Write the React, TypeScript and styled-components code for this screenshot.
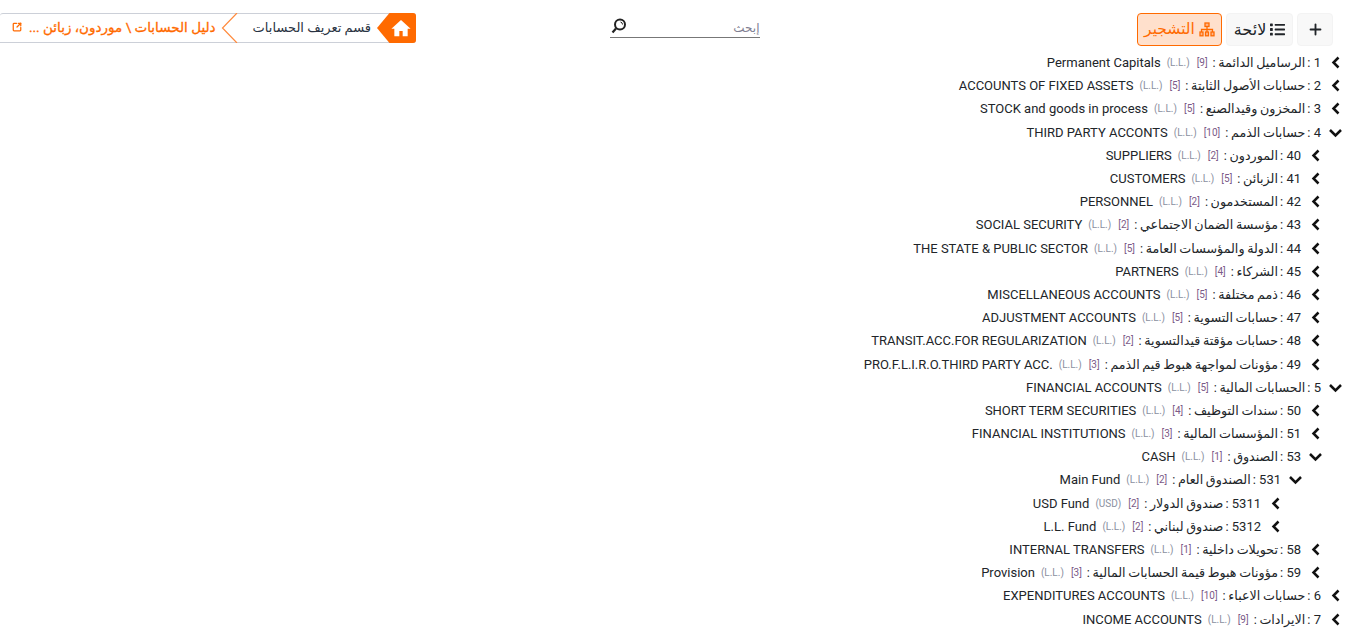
import React from "react";
import styled, { createGlobalStyle } from "styled-components";
import { FaList } from "react-icons/fa";
import { Plus, SquareArrowOutUpRight } from "lucide-react";

const Global = createGlobalStyle`
  html, body { margin: 0; padding: 0; background: #fff; height: 633px; overflow: hidden; }
  body { font-family: Roboto, "Noto Sans", "DejaVu Sans", sans-serif; color: #212529; }
`;
const Page = styled.div`
  direction: rtl;
  width: 1350px;
  height: 633px;
  overflow: hidden;
  box-sizing: border-box;
  padding-top: 13px;
`;
const Header = styled.header`
  display: grid;
  grid-template-columns: 1fr 1fr 1fr;
  align-items: start;
  height: 38px;
  padding-right: 17px;
`;
const Actions = styled.div`
  display: flex;
  gap: 4px;
`;
const ToolButton = styled.button<{ $active?: boolean }>`
  width: ${(p) => (p.$active ? 85 : 67)}px;
  height: 33px;
  box-sizing: border-box;
  display: flex;
  align-items: center;
  justify-content: center;
  gap: 4px;
  padding: 0 0 1px;
  border-radius: 4px;
  font-family: inherit;
  font-size: ${(p) => (p.$active ? 15.5 : 16)}px;
  color: ${(p) => (p.$active ? "#ff6a00" : "#212529")};
  background: ${(p) => (p.$active ? "#ffe0cc" : "#f8f8f8")};
  border: 1px solid ${(p) => (p.$active ? "#ff6a00" : "#f3f3f3")};
`;
const PlusButton = styled(ToolButton)`
  width: 36px;
`;
const SearchBox = styled.div`
  width: 150px;
  height: 24px;
  margin-left: 36px;
  justify-self: center;
  display: flex;
  align-items: center;
  justify-content: space-between;
  border-bottom: 1px solid #777;
  font-size: 12px;
  color: #7f7f92;
`;
const SearchHint = styled.span`
  padding-top: 5px;
`;
const SearchIcon = styled.svg`
  width: 16px;
  height: 16px;
  margin-top: 2px;
  margin-left: 1px;
`;
const Crumbs = styled.nav`
  justify-self: end;
  width: 416px;
  height: 30px;
  box-sizing: border-box;
  display: flex;
  align-items: center;
  padding-bottom: 2px;
  border: 1px solid #ccd0d8;
  border-left: none;
  border-radius: 3px 3px 3px 0;
  font-size: 13px;
  white-space: nowrap;
`;
const HomeTag = styled.div`
  width: 39px;
  height: 30px;
  margin: -1px -1px -3px 0;
  background: #ff6a00;
  display: flex;
  align-items: center;
  padding-right: 5px;
  box-sizing: border-box;
  border-radius: 0 3px 3px 0;
  clip-path: polygon(100% 0, 100% 100%, 32% 100%, 0 50%, 32% 0);
  flex: none;
`;
const CrumbText = styled.span`
  margin-right: 6px;
  color: #2a3342;
`;
const Divider = styled.svg`
  width: 18px;
  height: 30px;
  margin: -1px 14px -3px 0;
  flex: none;
`;
const CrumbLink = styled.span`
  margin-right: 5px;
  color: #ff6a00;
  font-size: 13.5px;
  -webkit-text-stroke: 0.3px #ff6a00;
  display: flex;
  align-items: center;
  gap: 7px;
`;
const Tree = styled.ul`
  list-style: none;
  margin: 0;
  padding: 0 8px 0 0;
`;
const Row = styled.li<{ $level: number }>`
  height: 23.2px;
  display: flex;
  align-items: center;
  gap: 8px;
  padding-right: ${(p) => p.$level * 20}px;
  font-size: 13px;
  white-space: nowrap;
  color: #212529;
`;
const Toggle = styled.svg`
  width: 13px;
  height: 13px;
  flex: none;
`;
const Label = styled.span`
  display: flex;
  align-items: center;
`;
const Code = styled.span`
  margin-left: 2px;
`;
const ArabicPart = styled.span`
  font-size: 12.7px;
  word-spacing: -0.5px;
`;
const Count = styled.span`
  font-size: 10px;
  color: #7b5a88;
  margin-right: 5px;
`;
const Currency = styled.span`
  direction: ltr;
  unicode-bidi: isolate;
  font-size: 10px;
  color: #8a90a0;
  margin-right: 7px;
`;
const EnglishName = styled.span`
  direction: ltr;
  unicode-bidi: isolate;
  margin-right: 6px;
`;

type Item = { l: number; no: string; ar: string; n: number; cur?: string; en: string; open?: boolean };
const items: Item[] = [
  { l: 0, no: "1", ar: "الرساميل الدائمة", n: 9, en: "Permanent Capitals" },
  { l: 0, no: "2", ar: "حسابات الأصول الثابتة", n: 5, en: "ACCOUNTS OF FIXED ASSETS" },
  { l: 0, no: "3", ar: "المخزون وقيدالصنع", n: 5, en: "STOCK and goods in process" },
  { l: 0, no: "4", ar: "حسابات الذمم", n: 10, en: "THIRD PARTY ACCONTS", open: true },
  { l: 1, no: "40", ar: "الموردون", n: 2, en: "SUPPLIERS" },
  { l: 1, no: "41", ar: "الزبائن", n: 5, en: "CUSTOMERS" },
  { l: 1, no: "42", ar: "المستخدمون", n: 2, en: "PERSONNEL" },
  { l: 1, no: "43", ar: "مؤسسة الضمان الاجتماعي", n: 2, en: "SOCIAL SECURITY" },
  { l: 1, no: "44", ar: "الدولة والمؤسسات العامة", n: 5, en: "THE STATE & PUBLIC SECTOR" },
  { l: 1, no: "45", ar: "الشركاء", n: 4, en: "PARTNERS" },
  { l: 1, no: "46", ar: "ذمم مختلفة", n: 5, en: "MISCELLANEOUS ACCOUNTS" },
  { l: 1, no: "47", ar: "حسابات التسوية", n: 5, en: "ADJUSTMENT ACCOUNTS" },
  { l: 1, no: "48", ar: "حسابات مؤقتة قيدالتسوية", n: 2, en: "TRANSIT.ACC.FOR REGULARIZATION" },
  { l: 1, no: "49", ar: "مؤونات لمواجهة هبوط قيم الذمم", n: 3, en: "PRO.F.L.I.R.O.THIRD PARTY ACC." },
  { l: 0, no: "5", ar: "الحسابات المالية", n: 5, en: "FINANCIAL ACCOUNTS", open: true },
  { l: 1, no: "50", ar: "سندات التوظيف", n: 4, en: "SHORT TERM SECURITIES" },
  { l: 1, no: "51", ar: "المؤسسات المالية", n: 3, en: "FINANCIAL INSTITUTIONS" },
  { l: 1, no: "53", ar: "الصندوق", n: 1, en: "CASH", open: true },
  { l: 2, no: "531", ar: "الصندوق العام", n: 2, en: "Main Fund", open: true },
  { l: 3, no: "5311", ar: "صندوق الدولار", n: 2, cur: "USD", en: "USD Fund" },
  { l: 3, no: "5312", ar: "صندوق لبناني", n: 2, en: "L.L. Fund" },
  { l: 1, no: "58", ar: "تحويلات داخلية", n: 1, en: "INTERNAL TRANSFERS" },
  { l: 1, no: "59", ar: "مؤونات هبوط قيمة الحسابات المالية", n: 3, en: "Provision" },
  { l: 0, no: "6", ar: "حسابات الاعباء", n: 10, en: "EXPENDITURES ACCOUNTS" },
  { l: 0, no: "7", ar: "الايرادات", n: 9, en: "INCOME ACCOUNTS" },
];

function TreeIcon() {
  return (
    <svg width="16" height="15" viewBox="0 0 16 15" fill="#ffb48a" stroke="#ff6a00" strokeWidth="1.3">
      <rect x="6" y="1" width="4" height="3.5" />
      <path d="M8 4.5V8M2.5 10V7.5H13.5V10M8 8V10" fill="none" />
      <rect x="1" y="10" width="3" height="3.8" />
      <rect x="6.5" y="10" width="3" height="3.8" />
      <rect x="12" y="10" width="3" height="3.8" />
    </svg>
  );
}

export default function App() {
  return (
    <Page>
      <Global />
      <Header>
        <Actions>
          <PlusButton><Plus size={17} strokeWidth={2.6} /></PlusButton>
          <ToolButton><FaList size={15} />لائحة</ToolButton>
          <ToolButton $active><TreeIcon />التشجير</ToolButton>
        </Actions>
        <SearchBox>
          <SearchHint>إبحث</SearchHint>
          <SearchIcon viewBox="0 0 16 16" fill="none" stroke="#222">
            <circle cx="9" cy="6.5" r="5" strokeWidth="2" />
            <path d="M5 10.5 L1.5 14.5" strokeWidth="2.2" />
            <path d="M9.5 4 a2.5 2.5 0 0 1 2 2.5" strokeWidth="1" />
          </SearchIcon>
        </SearchBox>
        <Crumbs>
          <HomeTag>
            <svg width="20" height="20" viewBox="0 0 24 24" fill="#fff">
              <path d="M12 2.5 L0.5 13 H4 V22 H10 V15.5 H14 V22 H20 V13 H23.5 Z" />
            </svg>
          </HomeTag>
          <CrumbText>قسم تعريف الحسابات</CrumbText>
          <Divider viewBox="0 0 18 30" fill="none" stroke="#ff8a3c">
            <path d="M16 0 L1.5 15 L16 30" strokeWidth="1.2" />
          </Divider>
          <CrumbLink>
            دليل الحسابات \ موردون، زبائن ...
            <SquareArrowOutUpRight size={10} strokeWidth={3} />
          </CrumbLink>
        </Crumbs>
      </Header>
      <Tree>
        {items.map((it) => (
          <Row key={it.no} $level={it.l}>
            <Toggle viewBox="0 0 13 13" fill="none" stroke="#111" strokeWidth="2.5">
              {it.open ? <path d="M1 4 L6.5 9.5 L12 4" /> : <path d="M9.5 1.5 L4.5 6.5 L9.5 11.5" />}
            </Toggle>
            <Label>
              <Code>{it.no} :</Code>
              <ArabicPart>{it.ar} :</ArabicPart>
              <Count>[{it.n}]</Count>
              <Currency>({it.cur ?? "L.L."})</Currency>
              <EnglishName>{it.en}</EnglishName>
            </Label>
          </Row>
        ))}
      </Tree>
    </Page>
  );
}
